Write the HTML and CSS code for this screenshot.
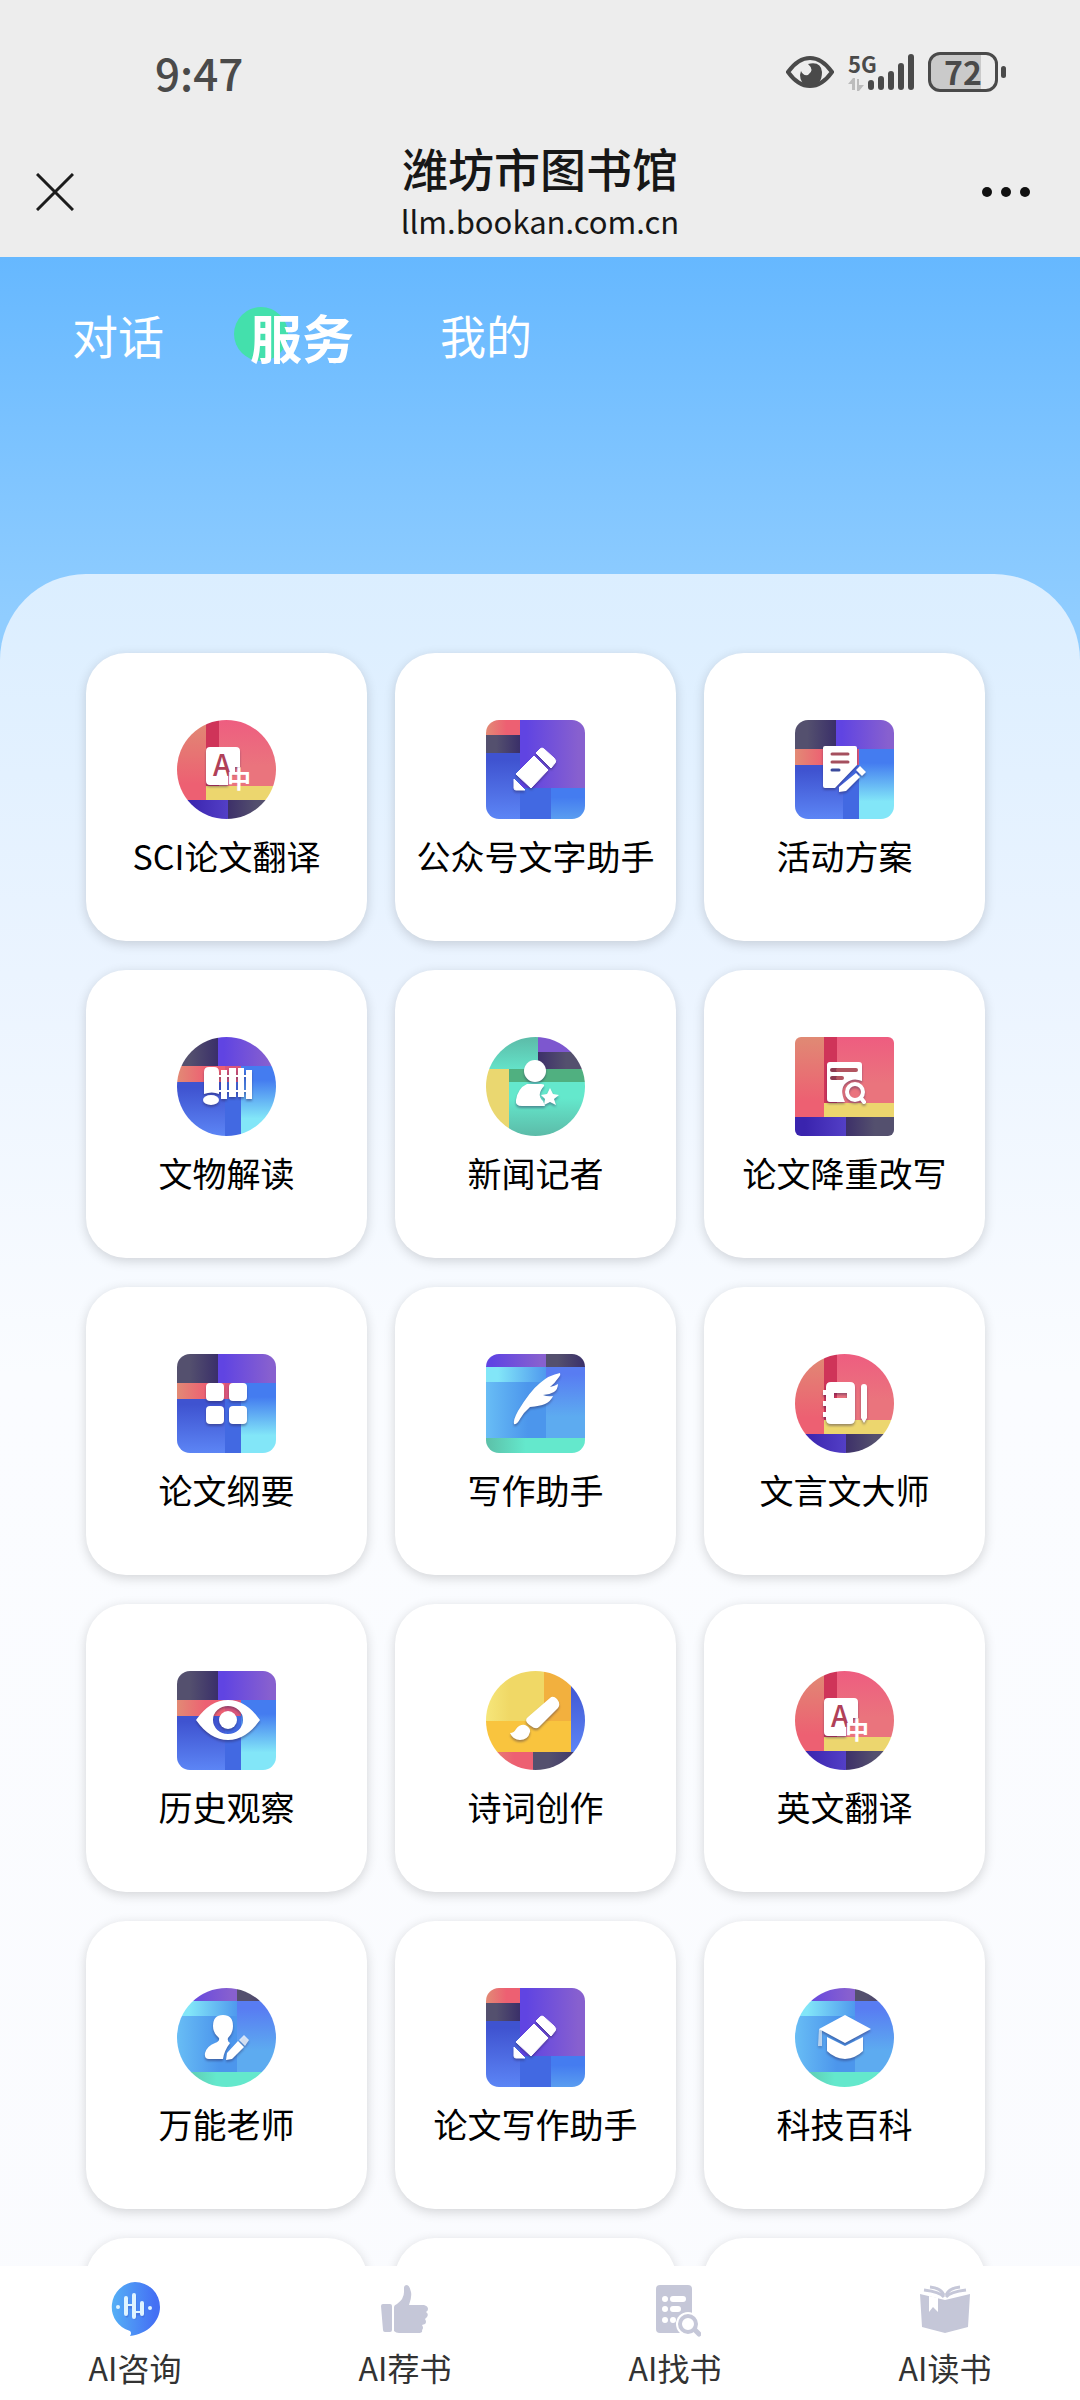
FILE: index.html
```html
<!DOCTYPE html>
<html lang="zh-CN">
<head>
  <meta charset="UTF-8">
  <meta name="viewport" content="width=device-width, initial-scale=1">
  <title>潍坊市图书馆</title>
  <link rel="stylesheet" href="styles.css">
</head>
<body>
  <!-- shared icon parts -->
  <svg class="sprite" width="0" height="0" aria-hidden="true">
    <defs>
      <linearGradient id="coral" x2="0" y2="1"><stop offset="0" stop-color="#e08a74"/><stop offset="0.8" stop-color="#ed6072"/></linearGradient>
      <linearGradient id="coralH"><stop offset="0" stop-color="#e28a75"/><stop offset="0.6" stop-color="#ed6072"/></linearGradient>
      <linearGradient id="pink" x2="0" y2="1"><stop offset="0" stop-color="#ee5d80"/><stop offset="0.7" stop-color="#ea747d"/></linearGradient>
      <linearGradient id="indigo"><stop offset="0.2" stop-color="#3a24ae"/><stop offset="1" stop-color="#533fc6"/></linearGradient>
      <linearGradient id="slate"><stop offset="0" stop-color="#3d3069"/><stop offset="0.6" stop-color="#54506e"/></linearGradient>
      <linearGradient id="slateR"><stop offset="0.3" stop-color="#54506e"/><stop offset="1" stop-color="#3a2f69"/></linearGradient>
      <linearGradient id="violet"><stop offset="0.1" stop-color="#6044e2"/><stop offset="0.9" stop-color="#8760cf"/></linearGradient>
      <linearGradient id="royal" x2="0" y2="1"><stop offset="0.1" stop-color="#3f53d0"/><stop offset="1" stop-color="#5c85f5"/></linearGradient>
      <linearGradient id="aqua" x2="0" y2="1"><stop offset="0.2" stop-color="#447cf0"/><stop offset="0.75" stop-color="#82e6f8"/></linearGradient>
      <linearGradient id="azure" x2="0" y2="1"><stop offset="0.3" stop-color="#447cf0"/><stop offset="1" stop-color="#5a9df0"/></linearGradient>
      <linearGradient id="mint" x2="0" y2="1"><stop offset="0.3" stop-color="#64e8cc"/><stop offset="1" stop-color="#5cbba8"/></linearGradient>
      <linearGradient id="mintR" x2="0" y2="1"><stop offset="0" stop-color="#5cbba8"/><stop offset="1" stop-color="#64e2c8"/></linearGradient>
      <linearGradient id="mintH"><stop offset="0" stop-color="#5cc0a8"/><stop offset="0.4" stop-color="#64e8cc"/></linearGradient>
      <linearGradient id="ice"><stop offset="0.2" stop-color="#82e6f8"/><stop offset="1" stop-color="#4f99ee"/></linearGradient>
      <linearGradient id="sea"><stop offset="0" stop-color="#68bdf5"/><stop offset="0.7" stop-color="#4c96ec"/></linearGradient>
      <linearGradient id="sky" x2="0" y2="1"><stop offset="0.1" stop-color="#587cf2"/><stop offset="0.7" stop-color="#5dabf0"/></linearGradient>
      <linearGradient id="lemon"><stop offset="0" stop-color="#f6e67a"/><stop offset="0.4" stop-color="#f0d866"/></linearGradient>
      <linearGradient id="chat"><stop offset="0" stop-color="#55b0f6"/><stop offset="0.9" stop-color="#4470f4"/></linearGradient>
    </defs>

    <symbol id="bg-red" viewBox="0 0 99 99">
      <path fill="url(#coral)" d="M0 0h29v80H0z"/>
      <path fill="#cf3459" d="M29 0h13v66H29z"/>
      <path fill="url(#pink)" d="M42 0h57v66H42z"/>
      <path fill="#ecd66e" d="M29 66h70v14H29z"/>
      <path fill="url(#indigo)" d="M0 80h51v19H0z"/>
      <path fill="url(#slate)" d="M51 80h48v19H51z"/>
    </symbol>
    <symbol id="bg-blue" viewBox="0 0 99 99">
      <path fill="url(#slateR)" d="M0 0h41v29H0z"/>
      <path fill="url(#violet)" d="M41 0h58v29H41z"/>
      <path fill="url(#coralH)" d="M0 29h48v16H0z"/>
      <path fill="#d9557b" d="M48 29h16v16H48z"/>
      <path fill="url(#royal)" d="M0 45h48v54H0z"/>
      <path fill="#4269e2" d="M48 45h16v54H48z"/>
      <path fill="url(#aqua)" d="M64 29h35v70H64z"/>
    </symbol>
    <symbol id="bg-purple" viewBox="0 0 99 99">
      <path fill="url(#coralH)" d="M0 0h34v15H0z"/>
      <path fill="url(#slateR)" d="M0 15h34v18H0z"/>
      <path fill="url(#royal)" d="M0 33h34v66H0z"/>
      <path fill="url(#violet)" d="M34 0h65v68H34z"/>
      <path fill="#4269e2" d="M34 68h31v31H34z"/>
      <path fill="url(#azure)" d="M65 68h34v31H65z"/>
    </symbol>
    <symbol id="bg-green" viewBox="0 0 99 99">
      <path fill="url(#mintR)" d="M0 0h52v32H0z"/>
      <path fill="#7d57cf" d="M52 0h47v15H52z"/>
      <path fill="url(#slate)" d="M52 15h47v17H52z"/>
      <path fill="#ead770" d="M0 32h23v67H0z"/>
      <path fill="#50b080" d="M23 32h76v13H23z"/>
      <path fill="url(#mint)" d="M23 45h76v54H23z"/>
    </symbol>
    <symbol id="bg-sky" viewBox="0 0 99 99">
      <path fill="url(#violet)" d="M0 0h60v13H0z"/>
      <path fill="url(#slateR)" d="M60 0h39v13H60z"/>
      <path fill="url(#ice)" d="M0 13h60v15H0z"/>
      <path fill="url(#sea)" d="M0 28h60v56H0z"/>
      <path fill="url(#sky)" d="M60 13h39v71H60z"/>
      <path fill="url(#mintH)" d="M0 84h99v15H0z"/>
    </symbol>
    <symbol id="bg-yellow" viewBox="0 0 99 99">
      <path fill="url(#lemon)" d="M0 0h58v50H0z"/>
      <path fill="#f2b03e" d="M58 0h27v50H58z"/>
      <path fill="#f9c43e" d="M0 50h85v31H0z"/>
      <path fill="url(#royal)" d="M85 0h14v81H85z"/>
      <path fill="url(#coralH)" d="M0 81h47v18H0z"/>
      <path fill="url(#slateR)" d="M47 81h52v18H47z"/>
    </symbol>

    <symbol id="g-translate" viewBox="0 0 99 99">
      <path fill="#fff" d="M33 27h26q4 0 4 4v16h-5v6h-7v12H33q-4 0-4-4V31q0-4 4-4z"/>
    </symbol>
    <symbol id="g-pencil" viewBox="0 0 99 99">
      <path fill="#fff" stroke="#fff" stroke-linejoin="round" d="M48 36l14 14-17 18-15-14zM54 29q2-2 4 0l10 9q3 3 1 5l-4 5-15-15zM28 59l11 11h-9q-2 0-2-2z"/>
    </symbol>
    <symbol id="g-plan" viewBox="0 0 99 99">
      <path fill="#fff" d="M30 26h30q2 0 2 2v17L40 68H30q-2 0-2-2V28q0-2 2-2zM61 53l4 4-14 14-7 1V67zM65 46l6 6-4 4-6-6z"/>
      <path stroke="#a5505e" stroke-width="3" stroke-linecap="round" d="M37 34h16M37 42h16"/>
      <path stroke="#3a4a9c" stroke-width="3" stroke-linecap="round" d="M37 50h7"/>
    </symbol>
    <symbol id="g-scroll" viewBox="0 0 99 99">
      <path fill="#fff" d="M27 35q0-5 5-5h5q5 0 5 5v22q-7-3-15 0zM44 33h6v29h-6zM52 31h7v29h-7zM61 31h6v29h-6zM69 33h6v29h-6zM42 38h28v2H42zM42 53h28v2H42z"/>
      <ellipse fill="#fff" cx="34" cy="63" rx="8" ry="5"/>
    </symbol>
    <symbol id="g-reporter" viewBox="0 0 99 99">
      <circle fill="#fff" cx="49" cy="34" r="11"/>
      <path fill="#fff" d="M41 47h14q4 0 3 2-8 9-1 15l2 5H36q-7 0-6-6 2-12 11-16zM64 51l3 6 6 1-5 4 2 6-6-3-6 3 1-6-4-4 6-1z"/>
    </symbol>
    <symbol id="g-review" viewBox="0 0 99 99">
      <path fill="#fff" d="M35 25h29q3 0 3 3v16q-9-4-16 2t-1 19H35q-3 0-3-3V28q0-3 3-3z"/>
      <path stroke="#8c3a50" stroke-width="4" stroke-linecap="round" d="M37 33h5M37 41h5"/>
      <path stroke="#b25560" stroke-width="4" stroke-linecap="round" d="M43 33h18M43 41h4"/>
      <circle cx="60" cy="55" r="8" fill="none" stroke="#fff" stroke-width="4"/>
      <path stroke="#fff" stroke-width="4" stroke-linecap="round" d="M66 61l3 4"/>
    </symbol>
    <symbol id="g-grid" viewBox="0 0 99 99">
      <g fill="#fff">
        <rect x="29" y="29" width="18" height="18" rx="4"/><rect x="52" y="29" width="18" height="18" rx="4"/>
        <rect x="29" y="52" width="18" height="18" rx="4"/><rect x="52" y="52" width="18" height="18" rx="4"/>
      </g>
    </symbol>
    <symbol id="g-feather" viewBox="0 0 99 99">
      <path fill="#fff" d="M74 19q1 2-1 4-4 6-9 10 5-1 8-3 0 5-4 8-5 3-11 3 5 2 10 1-2 5-8 8-5 2-15 3-6 5-10 12-3 6-6 5-1-4 4-13Q44 37 54 29q9-8 20-10z"/>
    </symbol>
    <symbol id="g-notebook" viewBox="0 0 99 99">
      <path fill="#fff" fill-rule="evenodd" d="M36 28h19q5 0 5 5v32q0 5-5 5H36q-5 0-5-5v-2h-3v-5h3v-6h-3v-5h3v-6h-3v-5h3v-3q0-5 5-5zM39 39v5h13v-5z"/>
      <path fill="#fff" d="M66 33q0-3 3-3t3 3v31l-3 5-3-5z"/>
    </symbol>
    <symbol id="g-eye" viewBox="0 0 99 99">
      <path fill="#fff" fill-rule="evenodd" d="M19 49q14-20 32-20t32 20q-14 20-32 20T19 49zM36 49a15 14 0 0 0 30 0 15 14 0 0 0-30 0z"/>
      <circle fill="#fff" cx="51" cy="49" r="9"/>
    </symbol>
    <symbol id="g-brush" viewBox="0 0 99 99">
      <path fill="#fff" d="M64 27q3-3 7 1 4 5 1 9L53 56q-3 3-8-1-8-5-3-9zM24 62q4 0 6-4 4-5 9-4 6 3 5 7-2 8-10 8-7 0-10-7z"/>
    </symbol>
    <symbol id="g-teacher" viewBox="0 0 99 99">
      <path fill="#fff" d="M46 27q10 0 10 11 0 7-5 12-1 3 2 5-6 8-7 16H32q-5 0-4-6 2-7 10-10 5-2 4-5-6-5-6-12 0-11 10-11zM61 53l6 6-12 12-6 1 1-7z"/>
      <path fill="#fff" opacity="0.75" d="M62 52l5-5 5 5-4 6z"/>
    </symbol>
    <symbol id="g-science" viewBox="0 0 99 99">
      <path fill="#fff" d="M50 27l26 14-26 14-26-14zM32 49l18 9 18-9v14q-7 7-18 8-11-1-18-8z"/>
      <path fill="#fff" opacity="0.6" d="M24 41h3v17h-4z"/>
    </symbol>
  </svg>

  <div class="app">
    <header class="header">
      <div class="status">
        <span class="time">9:47</span>
        <div class="status-icons">
          <svg width="48" height="34" viewBox="0 0 48 34" aria-hidden="true">
            <path d="M2 17Q12 3 24 3t22 14Q36 31 24 31T2 17z" fill="none" stroke="#4a4a4a" stroke-width="4"/>
            <path d="M22 9q13-3 14 8 0 14-12 14-10-1-10-11l1-4q2 5 7 4 7-5 0-11z" fill="#4a4a4a"/>
          </svg>
          <div class="signal">
            <span class="network">5G</span>
            <svg width="66" height="38" viewBox="0 0 66 38" aria-hidden="true">
              <path d="M23 30v4M33 26v8M43 21v13M53 13v21M63 4v30" stroke="#4a4a4a" stroke-width="6" stroke-linecap="round"/>
              <path d="M0 31l5-6h2v12H4v-6zM9 26h2v6h5l-5 6H9z" fill="#bcbcbc"/>
            </svg>
          </div>
          <div class="battery"><span>72</span></div>
        </div>
      </div>
      <div class="titlebar">
        <button class="icon-btn" type="button" aria-label="关闭">
          <svg width="38" height="38" viewBox="0 0 38 38"><path d="M1 1l36 36M37 1L1 37" stroke="#1c1c1c" stroke-width="3"/></svg>
        </button>
        <div class="titles">
          <h1>潍坊市图书馆</h1>
          <p>llm.bookan.com.cn</p>
        </div>
        <button class="icon-btn more" type="button" aria-label="更多">
          <svg width="50" height="12" viewBox="0 0 50 12" fill="#111"><circle cx="6" cy="6" r="5"/><circle cx="25" cy="6" r="5"/><circle cx="44" cy="6" r="5"/></svg>
        </button>
      </div>
    </header>

    <main class="main">
      <nav class="tabs">
        <a href="#">对话</a>
        <a href="#" class="active">服务</a>
        <a href="#">我的</a>
      </nav>

      <section class="panel">
        <div class="grid">
          <a class="card" href="#"><svg class="tile round"><use href="#bg-red"/><use class="glyph" href="#g-translate"/><text class="glyph-a" x="45" y="56">A</text><text class="glyph-zh" x="62" y="68">中</text></svg><span>SCI论文翻译</span></a>
          <a class="card" href="#"><svg class="tile"><use href="#bg-purple"/><use class="glyph" href="#g-pencil"/></svg><span>公众号文字助手</span></a>
          <a class="card" href="#"><svg class="tile"><use href="#bg-blue"/><use class="glyph" href="#g-plan"/></svg><span>活动方案</span></a>

          <a class="card" href="#"><svg class="tile round"><use href="#bg-blue"/><use class="glyph" href="#g-scroll"/></svg><span>文物解读</span></a>
          <a class="card" href="#"><svg class="tile round"><use href="#bg-green"/><use class="glyph" href="#g-reporter"/></svg><span>新闻记者</span></a>
          <a class="card" href="#"><svg class="tile tight"><use href="#bg-red"/><use class="glyph" href="#g-review"/></svg><span>论文降重改写</span></a>

          <a class="card" href="#"><svg class="tile"><use href="#bg-blue"/><use class="glyph" href="#g-grid"/></svg><span>论文纲要</span></a>
          <a class="card" href="#"><svg class="tile"><use href="#bg-sky"/><use class="glyph" href="#g-feather"/></svg><span>写作助手</span></a>
          <a class="card" href="#"><svg class="tile round"><use href="#bg-red"/><use class="glyph" href="#g-notebook"/></svg><span>文言文大师</span></a>

          <a class="card" href="#"><svg class="tile"><use href="#bg-blue"/><use class="glyph" href="#g-eye"/></svg><span>历史观察</span></a>
          <a class="card" href="#"><svg class="tile round"><use href="#bg-yellow"/><use class="glyph" href="#g-brush"/></svg><span>诗词创作</span></a>
          <a class="card" href="#"><svg class="tile round"><use href="#bg-red"/><use class="glyph" href="#g-translate"/><text class="glyph-a" x="45" y="56">A</text><text class="glyph-zh" x="62" y="68">中</text></svg><span>英文翻译</span></a>

          <a class="card" href="#"><svg class="tile round"><use href="#bg-sky"/><use class="glyph" href="#g-teacher"/></svg><span>万能老师</span></a>
          <a class="card" href="#"><svg class="tile"><use href="#bg-purple"/><use class="glyph" href="#g-pencil"/></svg><span>论文写作助手</span></a>
          <a class="card" href="#"><svg class="tile round"><use href="#bg-sky"/><use class="glyph" href="#g-science"/></svg><span>科技百科</span></a>

          <div class="card"></div>
          <div class="card"></div>
          <div class="card"></div>
        </div>
      </section>
    </main>

    <nav class="tabbar">
      <a href="#">
        <svg width="52" height="56" viewBox="0 0 52 56">
          <path fill="url(#chat)" d="M26 1a25 25 0 0 1 25 25c0 14-12 27-30 29q2-3 0-5A25 25 0 0 1 26 1z"/>
          <path stroke="#3b62cf" stroke-width="3" stroke-linecap="round" fill="none" opacity="0.5" d="M18 19v16M26 15v22M34 23v12M18 26h8M26 33h8"/>
          <path stroke="#dff4ff" stroke-width="4" stroke-linecap="round" fill="none" d="M17 17v16M25 14v22M33 22v11"/>
          <path stroke="#dff4ff" stroke-width="2" d="M17 24h8M25 31h8"/>
          <circle cx="9" cy="26" r="2" fill="#dff4ff"/><circle cx="41" cy="27" r="2" fill="#dff4ff"/>
        </svg>
        <span>AI咨询</span>
      </a>
      <a href="#">
        <svg width="52" height="56" viewBox="0 0 52 56" fill="#c5c7d8">
          <path d="M4 23h7q2 0 2 2v24q0 2-2 2H6q-2 0-2-2L2 25q0-2 2-2zM15 26q0-2 3-3 7-5 7-12V7q0-3 3-3 3 1 4 7 1 5-2 13h15q4 1 4 4 0 2-2 3 3 2 1 5l-2 2q2 3 0 5l-3 1q2 3 0 5 1 3-4 3H20q-3 0-5-2z"/>
        </svg>
        <span>AI荐书</span>
      </a>
      <a href="#">
        <svg width="52" height="56" viewBox="0 0 52 56">
          <rect x="7" y="4" width="36" height="48" rx="4" fill="#c5c7d8"/>
          <path stroke="#fff" stroke-width="6" stroke-linecap="round" d="M16 18h0M24 18h10M16 28h0M24 28h5M16 39h0M24 39h0"/>
          <circle cx="39" cy="43" r="12" fill="#fff"/>
          <circle cx="39" cy="43" r="8" fill="#fff" stroke="#c5c7d8" stroke-width="4"/>
          <path stroke="#c5c7d8" stroke-width="5" stroke-linecap="round" d="M46 49l4 4"/>
        </svg>
        <span>AI找书</span>
      </a>
      <a href="#">
        <svg width="52" height="56" viewBox="0 0 52 56">
          <path fill="#c5c7d8" d="M1 13l25 6 25-6-2 33-23 6-23-6z"/>
          <path fill="none" stroke="#c5c7d8" stroke-width="3" d="M5 9q16 2 20 7M11 6q11 1 14 8M47 9q-16 2-20 7M41 6q-11 1-14 8"/>
          <path fill="#fff" d="M10 15l9 2v14l-5-5-4 5z"/>
        </svg>
        <span>AI读书</span>
      </a>
    </nav>
  </div>
</body>
</html>
```

FILE: styles.css
```css
* { box-sizing: border-box; margin: 0; padding: 0; }
body { font-family: "Noto Sans CJK SC", sans-serif; color: #000; }
a { color: inherit; text-decoration: none; }
svg { display: block; flex: none; }
.sprite { position: absolute; }

.app { display: flex; flex-direction: column; height: 100vh; overflow: hidden; }

/* header */
.header { background: #ededed; padding-bottom: 15px; }
.status { display: flex; justify-content: space-between; align-items: center; height: 142px; padding: 2px 82px 0 155px; color: #4a4a4a; }
.time { font-size: 44px; line-height: 48px; font-weight: 500; }
.status-icons { display: flex; align-items: center; gap: 14px; }
.signal { position: relative; }
.network { position: absolute; left: 0; top: -4px; font-size: 22px; line-height: 28px; font-weight: 700; }
.battery { position: relative; width: 70px; height: 40px; border: 3px solid #4a4a4a; border-radius: 12px; background: linear-gradient(90deg, #cacaca 78%, transparent 78%); text-align: center; font-size: 32px; line-height: 33px; font-weight: 700; }
.battery::after { content: ""; position: absolute; right: -11px; top: 11px; width: 5px; height: 12px; border-radius: 3px; background: #4a4a4a; }
.titlebar { display: flex; justify-content: space-between; align-items: center; padding: 0 49px 0 36px; }
.titles { text-align: center; color: #171717; }
.titles h1 { font-size: 46px; line-height: 50px; font-weight: 500; }
.titles p { margin-top: 8px; font-size: 31px; line-height: 42px; }
.icon-btn { display: flex; width: 63px; border: 0; background: none; }
.icon-btn.more { width: 50px; }

/* content */
.main { flex: 1; min-height: 0; overflow: hidden; background: linear-gradient(#66b8ff, #90cdff 360px, #90cdff); }
.tabs { display: flex; align-items: center; height: 317px; padding: 0 72px 164px; font-size: 46px; line-height: 60px; color: #fff; }
.tabs .active { position: relative; z-index: 0; margin: 6px 86px 0; font-size: 52px; font-weight: 700; }
.tabs .active::before { content: ""; position: absolute; z-index: -1; left: -16px; top: 0; width: 54px; height: 54px; border-radius: 50%; background: #44e0ac; }

.panel { padding: 79px 95px 28px 86px; border-radius: 86px 86px 0 0; background: linear-gradient(#dbeeff, #ebf4ff 400px, #fafcff 800px, #fafbfe); }
.grid { display: grid; grid-template-columns: repeat(3, 1fr); gap: 29px 28px; }
.card { display: flex; flex-direction: column; align-items: center; height: 288px; padding-top: 67px; border-radius: 40px; background: #fff; box-shadow: 0 3px 12px rgba(0, 0, 0, 0.16); font-size: 34px; line-height: 44px; white-space: nowrap; }
.card span { margin-top: 15px; }
.tile { width: 99px; height: 99px; border-radius: 13px; }
.tile.round { border-radius: 50%; }
.tile.tight { border-radius: 6px; }
.glyph { filter: drop-shadow(0 2px 1px rgba(40, 30, 80, 0.4)); }
.glyph-a { font-size: 29px; font-weight: 500; text-anchor: middle; fill: #b04058; }
.glyph-zh { font-size: 24px; font-weight: 700; text-anchor: middle; fill: #fff; }

/* bottom bar */
.tabbar { display: flex; height: 134px; padding-top: 15px; background: #fff; color: #333; }
.tabbar a { flex: 1; display: flex; flex-direction: column; align-items: center; font-size: 32px; line-height: 40px; }
.tabbar span { margin-top: 10px; }
```
